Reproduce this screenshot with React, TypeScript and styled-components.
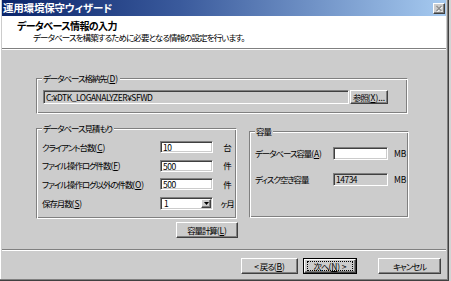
import React from "react";
import styled, { createGlobalStyle, css } from "styled-components";

const Global = createGlobalStyle`
  html, body { margin: 0; padding: 0; background: #d4d4d4; }
  body {
    font-family: "Noto Sans CJK JP", "Liberation Sans", sans-serif;
    font-feature-settings: "palt";
    font-size: 8.5px;
    letter-spacing: -1.1px;
    color: #000;
  }
  #root { width: 451px; height: 281px; overflow: hidden; }
  u { text-underline-offset: 1px; }
`;

const sunken = css`
  box-sizing: border-box;
  border: 1px solid;
  border-color: #808080 #ffffff #ffffff #808080;
  box-shadow: inset 1px 1px #404040, inset -1px -1px #cccccc;
`;

const raised = css`
  box-sizing: border-box;
  border: 1px solid;
  border-color: #ffffff #404040 #404040 #ffffff;
  box-shadow: inset -1px -1px #808080;
  background: #cccccc;
`;

const Window = styled.div`
  box-sizing: border-box;
  width: 449px;
  height: 281px;
  background: #cccccc;
  border-right: 1px solid #404040;
  border-bottom: 1px solid #404040;
  box-shadow: inset -1px -1px #808080, inset 1px 0 #ffffff;
  padding: 0 2px 2px 2px;
  display: flex;
  flex-direction: column;
`;

const TitleBar = styled.div`
  height: 16px;
  flex: none;
  display: flex;
  align-items: center;
  justify-content: space-between;
  padding: 0 0 0 1px;
  background: linear-gradient(to right, #0a246a 0%, #3a5a9c 40%, #a6caf0 100%);
  color: #fff;
  font-weight: bold;
  font-size: 10.5px;
  line-height: 16px;
  letter-spacing: -0.2px;
`;

const CloseButton = styled.div`
  ${raised};
  width: 12px;
  height: 11px;
  margin-right: 1px;
  display: flex;
  align-items: center;
  justify-content: center;
`;

const Header = styled.div`
  height: 32px;
  flex: none;
  background: #ffffff;
  padding: 5px 0 0 15px;
  box-sizing: border-box;
`;

const HeaderTitle = styled.div`
  font-weight: bold;
  font-size: 10px;
  line-height: 10px;
  letter-spacing: -0.6px;
`;

const HeaderSub = styled.div`
  margin-top: 1px;
  padding-left: 16px;
  font-size: 8.5px;
  line-height: 10px;
  letter-spacing: -0.9px;
`;

const Separator = styled.div`
  height: 1px;
  flex: none;
  background: #808080;
  border-bottom: 1px solid #ffffff;
`;

const Body = styled.div`
  height: 199px;
  flex: none;
  box-sizing: border-box;
  padding: 28px 0 0 34px;
  display: flex;
  flex-direction: column;
  align-items: flex-start;
`;

const Group = styled.div<{ $w: number; $h: number }>`
  position: relative;
  box-sizing: border-box;
  width: ${(p) => p.$w}px;
  height: ${(p) => p.$h}px;
  border: 1px solid;
  border-color: #808080 #ffffff #ffffff #808080;
  box-shadow: inset 1px 1px #ffffff, inset -1px -1px #808080;
`;

const Legend = styled.span`
  position: absolute;
  left: 5px;
  top: -6px;
  padding: 0 2px 0 1px;
  background: #cccccc;
  line-height: 11px;
`;

const Key = styled.span`
  letter-spacing: -0.1px;
`;

const PathRow = styled.div`
  display: flex;
  gap: 1px;
  padding: 11px 0 0 6px;
`;

const Field = styled.div<{ $w: number; $h?: number; $readonly?: boolean }>`
  ${sunken};
  width: ${(p) => p.$w}px;
  height: ${(p) => p.$h ?? 12}px;
  background: ${(p) => (p.$readonly ? "#cccccc" : "#ffffff")};
  padding: 0 2px;
  font-size: 8.5px;
  line-height: ${(p) => (p.$h ?? 12) - 2}px;
  letter-spacing: -0.5px;
  white-space: nowrap;
  overflow: hidden;
  flex: none;
`;

const Button = styled.div<{ $w: number; $h?: number }>`
  ${raised};
  width: ${(p) => p.$w}px;
  height: ${(p) => p.$h ?? 16}px;
  display: flex;
  align-items: center;
  justify-content: center;
  line-height: 10px;
  white-space: nowrap;
  flex: none;
`;

const DefaultButton = styled.div<{ $w: number }>`
  box-sizing: border-box;
  width: ${(p) => p.$w}px;
  height: 16px;
  border: 1px solid #000;
  display: flex;
  flex: none;
`;

const DefaultInner = styled.div`
  ${raised};
  flex: 1;
  display: flex;
  padding: 1px 2px;
`;

const FocusRect = styled.div`
  flex: 1;
  border: 1px dotted #000;
  display: flex;
  align-items: center;
  justify-content: center;
  line-height: 8px;
  white-space: nowrap;
`;

const Lower = styled.div`
  display: flex;
  align-items: flex-start;
  margin-top: 14px;
`;

const LeftColumn = styled.div`
  width: 202px;
  display: flex;
  flex-direction: column;
  align-items: flex-end;
  gap: 3px;
`;

const EstimateGroupInner = styled.div`
  display: flex;
  flex-direction: column;
  gap: 6.7px;
  padding: 12px 0 0 5px;
`;

const Row = styled.div<{ $fieldAt: number }>`
  display: grid;
  grid-template-columns: ${(p) => p.$fieldAt}px auto auto;
  align-items: center;
  height: 12px;
`;

const Label = styled.span`
  white-space: nowrap;
  line-height: 11px;
`;

const Unit = styled.span<{ $gap: number; $latin?: boolean }>`
  padding-left: ${(p) => p.$gap}px;
  white-space: nowrap;
  letter-spacing: ${(p) => (p.$latin ? "-0.3px" : "-1.1px")};
  line-height: 11px;
`;

const Combo = styled.div`
  ${sunken};
  width: 53px;
  height: 13px;
  background: #fff;
  display: flex;
  padding: 2px 2px 2px 3px;
  align-items: center;
  justify-content: space-between;
  line-height: 9px;
  letter-spacing: -0.5px;
`;

const ComboButton = styled.div`
  ${raised};
  width: 10px;
  height: 9px;
  display: flex;
  align-items: center;
  justify-content: center;
  margin-right: -1px;
`;

const CapacityGroupInner = styled.div`
  display: flex;
  flex-direction: column;
  gap: 14px;
  padding: 15px 0 0 5px;
`;

const Footer = styled.div`
  flex: 1;
  display: flex;
  justify-content: flex-end;
  align-items: flex-start;
  padding: 7px 5px 0 0;
  gap: 5px;
`;

const Spacer = styled.div<{ $w: number }>`
  width: ${(p) => p.$w}px;
  flex: none;
`;

const M = ({ k }: { k: string }) => (
  <Key>
    (<u>{k}</u>)
  </Key>
);

export default function App() {
  return (
    <>
      <Global />
      <Window>
        <TitleBar>
          <span>運用環境保守ウィザード</span>
          <CloseButton>
            <svg width="8" height="7" viewBox="0 0 8 7">
              <path d="M1.5 1 L6.5 6 M6.5 1 L1.5 6" stroke="#ffffff" strokeWidth="1.3" transform="translate(0.7 0.7)" />
              <path d="M1.5 1 L6.5 6 M6.5 1 L1.5 6" stroke="#8a8a8a" strokeWidth="1.3" />
            </svg>
          </CloseButton>
        </TitleBar>
        <Header>
          <HeaderTitle>データベース情報の入力</HeaderTitle>
          <HeaderSub>データベースを構築するために必要となる情報の設定を行います。</HeaderSub>
        </Header>
        <Separator />
        <Body>
          <Group $w={372} $h={36}>
            <Legend>
              データベース格納先<M k="D" />
            </Legend>
            <PathRow>
              <Field $w={306} $h={14} $readonly>
                C:¥DTK_LOGANALYZER¥SFWD
              </Field>
              <Button $w={38} $h={14}>
                参照<M k="X" />
                <Key>...</Key>
              </Button>
            </PathRow>
          </Group>
          <Lower>
            <LeftColumn>
              <Group $w={201} $h={91} style={{ alignSelf: "flex-start" }}>
                <Legend>データベース見積もり</Legend>
                <EstimateGroupInner>
                  <Row $fieldAt={118}>
                    <Label>
                      クライアント台数<M k="C" />
                    </Label>
                    <Field $w={53}>10</Field>
                    <Unit $gap={5}>台</Unit>
                  </Row>
                  <Row $fieldAt={118}>
                    <Label>
                      ファイル操作ログ件数<M k="F" />
                    </Label>
                    <Field $w={53}>500</Field>
                    <Unit $gap={5}>件</Unit>
                  </Row>
                  <Row $fieldAt={118}>
                    <Label>
                      ファイル操作ログ以外の件数<M k="O" />
                    </Label>
                    <Field $w={53}>500</Field>
                    <Unit $gap={5}>件</Unit>
                  </Row>
                  <Row $fieldAt={118}>
                    <Label>
                      保存月数<M k="S" />
                    </Label>
                    <Combo>
                      <span>1</span>
                      <ComboButton>
                        <svg width="5" height="3" viewBox="0 0 5 3">
                          <path d="M0 0 H5 L2.5 3 Z" fill="#000" />
                        </svg>
                      </ComboButton>
                    </Combo>
                    <Unit $gap={5}>ヶ月</Unit>
                  </Row>
                </EstimateGroupInner>
              </Group>
              <Button $w={62}>
                容量計算<M k="L" />
              </Button>
            </LeftColumn>
            <Group $w={160} $h={87} style={{ marginLeft: 11, marginTop: 3 }}>
              <Legend>容量</Legend>
              <CapacityGroupInner>
                <Row $fieldAt={78}>
                  <Label>
                    データベース容量<M k="A" />
                  </Label>
                  <Field $w={55} $h={13}></Field>
                  <Unit $gap={4} $latin>
                    MB
                  </Unit>
                </Row>
                <Row $fieldAt={78}>
                  <Label>ディスク空き容量</Label>
                  <Field $w={55} $h={13} $readonly>
                    14734
                  </Field>
                  <Unit $gap={4} $latin>
                    MB
                  </Unit>
                </Row>
              </CapacityGroupInner>
            </Group>
          </Lower>
        </Body>
        <Separator />
        <Footer>
          <Button $w={57}>
            <Key>&lt;</Key>&nbsp;戻る<M k="B" />
          </Button>
          <DefaultButton $w={54}>
            <DefaultInner>
              <FocusRect>
                次へ<M k="N" />
                <Key>&nbsp;&gt;</Key>
              </FocusRect>
            </DefaultInner>
          </DefaultButton>
          <Spacer $w={11} />
          <Button $w={63}>キャンセル</Button>
        </Footer>
      </Window>
    </>
  );
}
